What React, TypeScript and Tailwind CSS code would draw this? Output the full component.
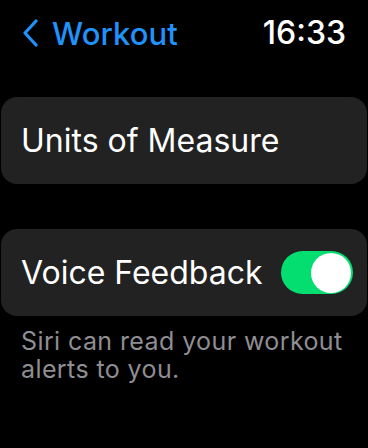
import React from 'react';

const font = { fontFamily: 'Inter, "Noto Sans", sans-serif' };

export default function App() {
  return (
    <div className="w-[368px] h-[448px] bg-black overflow-hidden text-white" style={font}>
      {/* header */}
      <div className="flex items-center justify-between pl-[22px] pr-[22px] pt-[14px] h-[52px]">
        <div className="flex items-center gap-[14px] text-[#1f93fb]">
          <svg width="16" height="28" viewBox="0 0 16 28" fill="none">
            <path d="M14 2 L3 14 L14 26" stroke="currentColor" strokeWidth="3.2" strokeLinecap="round" strokeLinejoin="round" />
          </svg>
          <span className="text-[31px] leading-none font-medium tracking-[0.1px]">Workout</span>
        </div>
        <span className="text-[32px] leading-none font-medium">16:33</span>
      </div>

      <div className="flex flex-col px-px pt-[45px]">
        <div className="h-[87px] rounded-[16px] bg-[#222222] flex items-center pl-[20px]">
          <span className="text-[32px] leading-none">Units of Measure</span>
        </div>

        <div className="mt-[45px] h-[87px] rounded-[16px] bg-[#222222] flex items-center justify-between pl-[20px] pr-[14px]">
          <span className="text-[32px] leading-none">Voice Feedback</span>
          <div className="w-[72px] h-[43px] rounded-full bg-[#04de71] flex items-center justify-end pr-[2px]">
            <div className="w-[40px] h-[40px] rounded-full bg-white" />
          </div>
        </div>

        <p className="mt-[11px] pl-[20px] pr-[10px] text-[25px] leading-[28px] tracking-[0.4px] text-[#8e8e93]">
          Siri can read your workout alerts to you.
        </p>
      </div>
    </div>
  );
}
